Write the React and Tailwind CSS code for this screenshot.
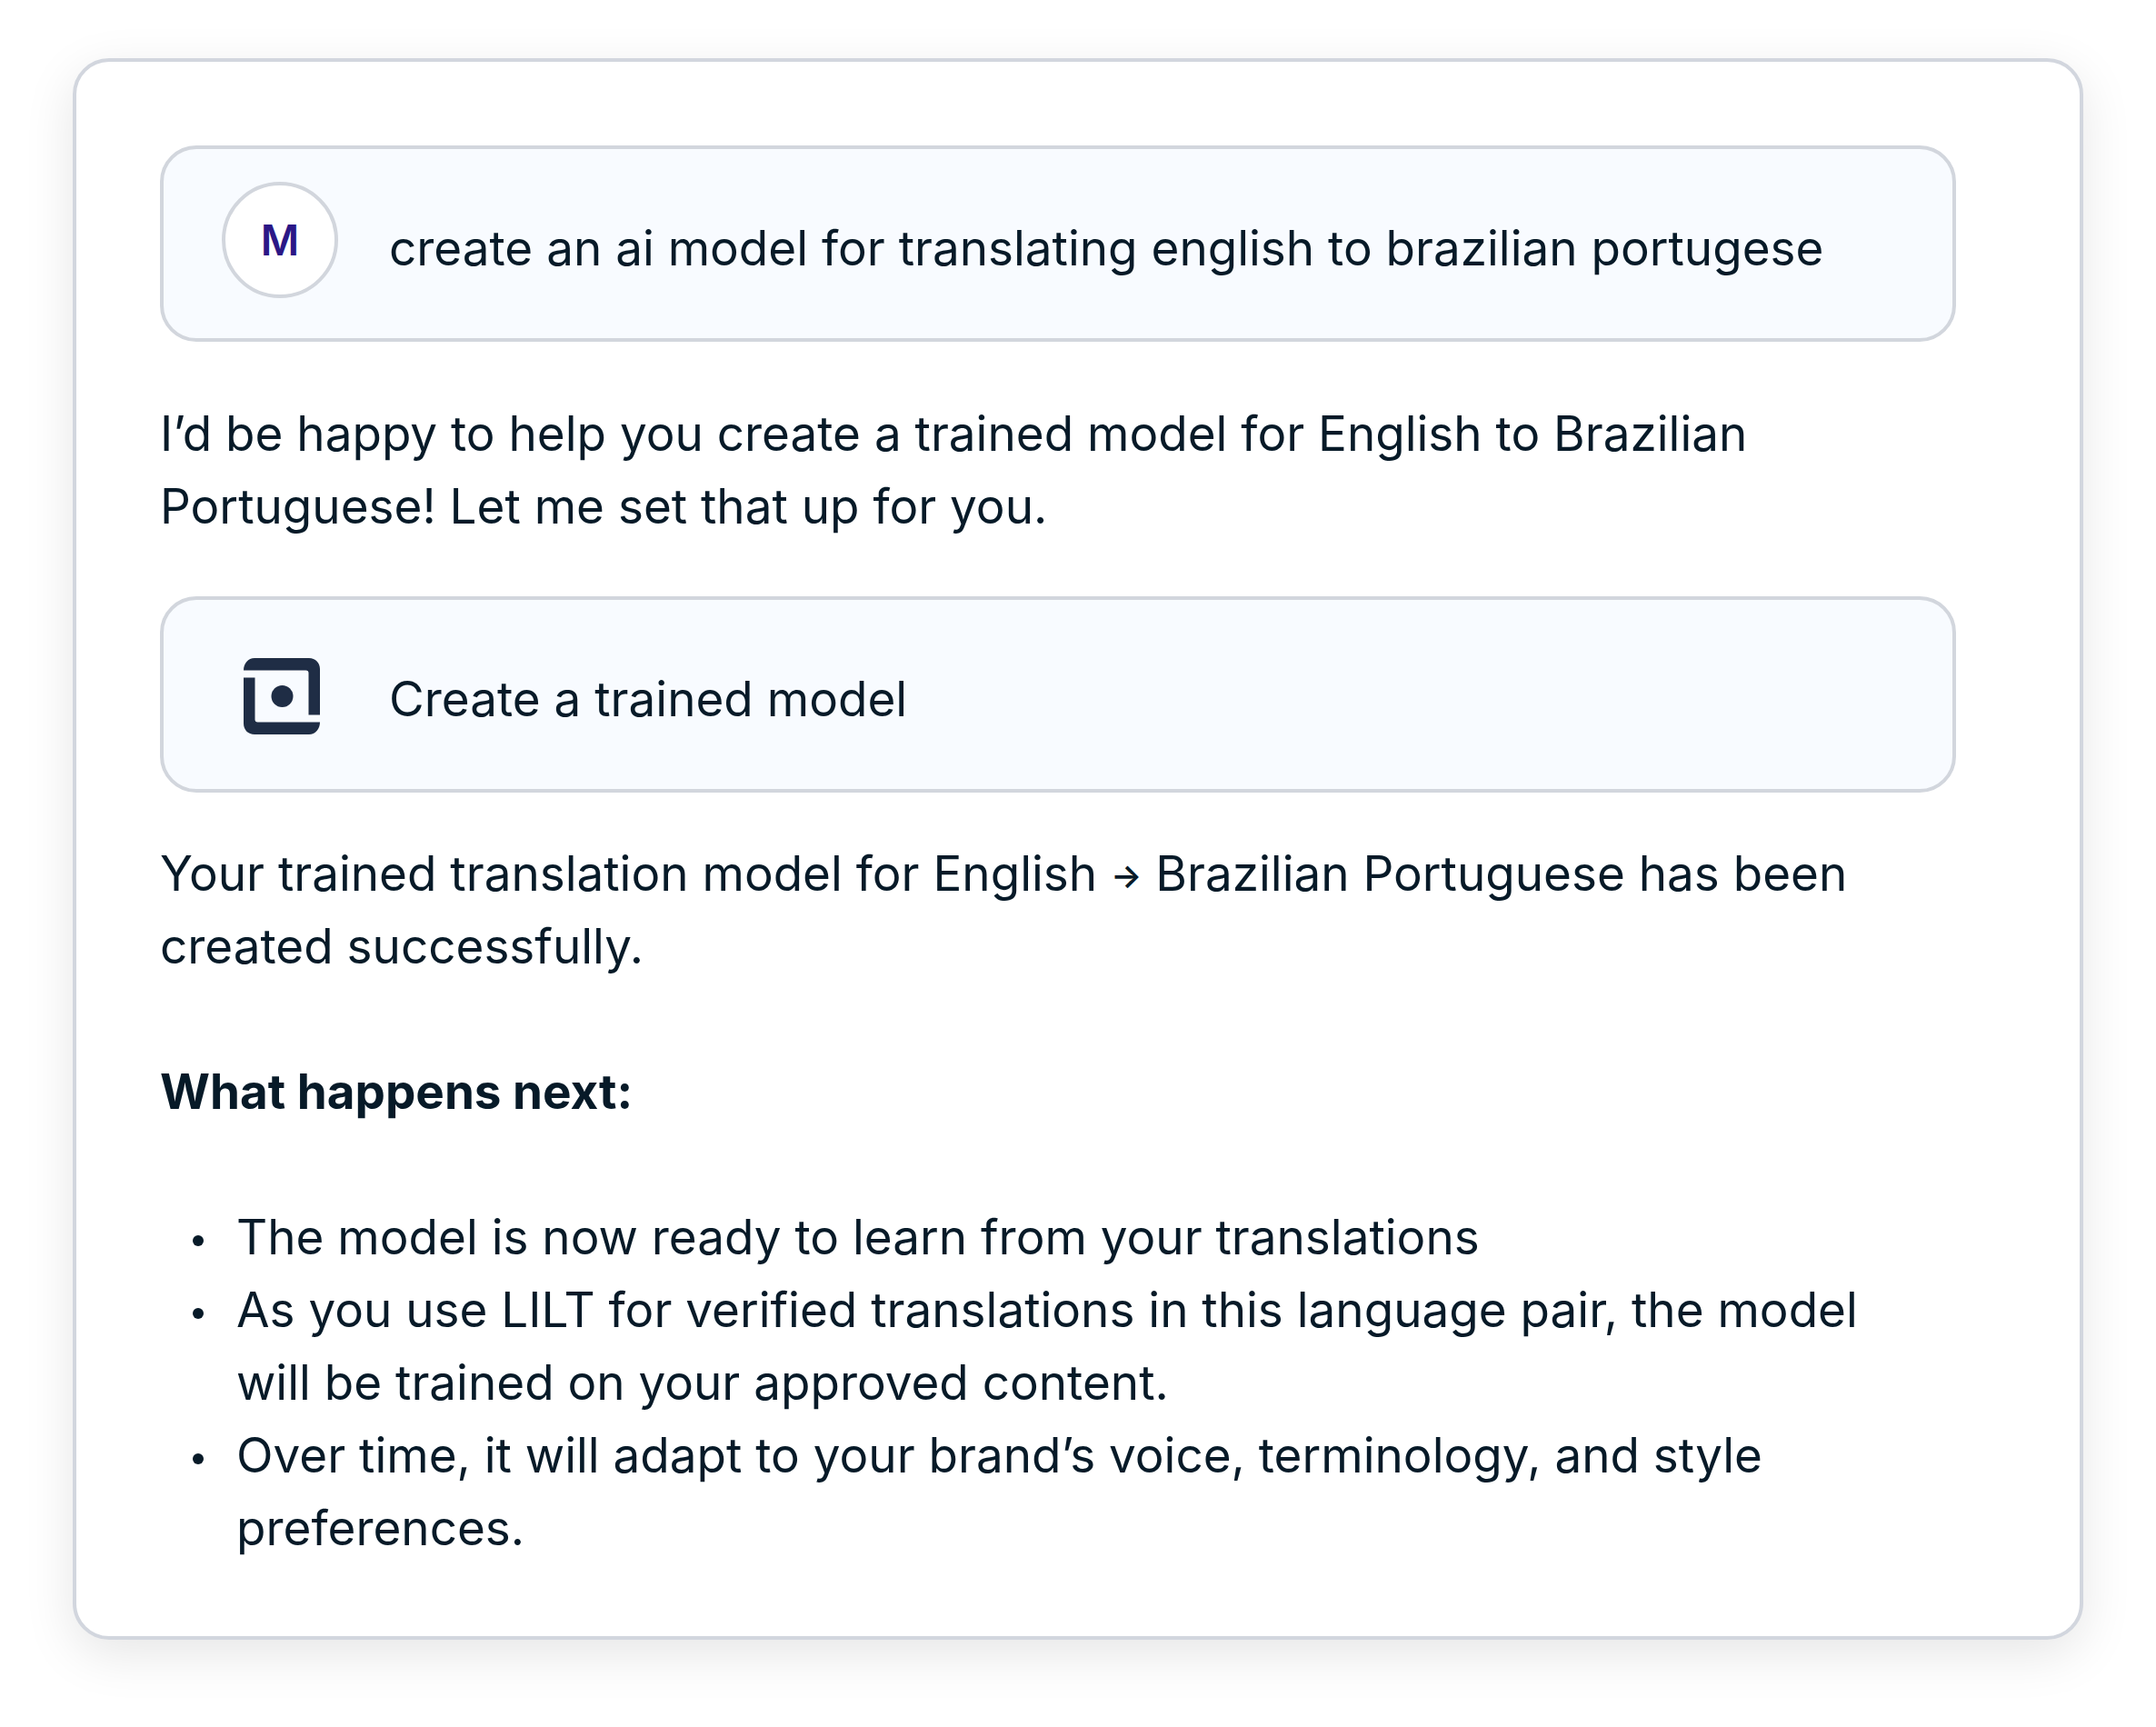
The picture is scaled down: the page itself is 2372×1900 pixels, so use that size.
const nextSteps = [
  "The model is now ready to learn from your translations",
  "As you use LILT for verified translations in this language pair, the model will be trained on your approved content.",
  "Over time, it will adapt to your brand’s voice, terminology, and style preferences.",
];

function ModelIcon() {
  return (
    <svg className="size-[84px]" viewBox="0 0 84 84" fill="#1f2d45" aria-hidden="true">
      <path d="M0 13.5C0 6 5 0 12 0H72C79 0 84 5 84 12V62.5H71.5V16.5A3 3 0 0 0 68.5 13.5Z" />
      <path d="M0 21.5H12.5V67.5A3 3 0 0 0 15.5 70.5H84C84 78 79 84 72 84H12C5 84 0 79 0 72Z" />
      <circle cx="42.5" cy="42" r="12" />
    </svg>
  );
}

function Bubble({ icon, children }) {
  return (
    <div className="flex items-start gap-14 rounded-[40px] border-4 border-[#d2d6dd] bg-[#f8fbff] pt-9 pr-14 pb-11 pl-16">
      {icon}
      <p className="mt-[33px] min-w-0 flex-1">{children}</p>
    </div>
  );
}

export default function App() {
  return (
    <main className="min-h-screen bg-white px-20 py-16 font-['Inter','Liberation_Sans',sans-serif] text-[53px] leading-[80px] text-[#071a28]">
      <section className="rounded-[40px] border-4 border-[#d2d6de] bg-white pt-23 pr-34 pb-[79px] pl-23 shadow-[0_16px_56px_rgba(0,0,0,0.1)]">
        <Bubble
          icon={
            <div className="flex size-32 shrink-0 items-center justify-center rounded-full border-4 border-[#d2d6dd] bg-white text-[46px] font-semibold text-[#2b1786]">
              M
            </div>
          }
        >
          create an ai model for translating english to brazilian portugese
        </Bubble>

        <p className="mt-[61px] mb-[59px]">
          I’d be happy to help you create a trained model for English to Brazilian Portuguese! Let me set that up for you.
        </p>

        <Bubble
          icon={
            <div className="size-32 shrink-0 pt-7 pl-6">
              <ModelIcon />
            </div>
          }
        >
          Create a trained model
        </Bubble>

        <p className="mt-[49px]">
          Your trained translation model for English{" "}
          <span className="align-[4px] text-4xl leading-none font-semibold">→</span> Brazilian Portuguese has been
          created successfully.
        </p>

        <h2 className="my-20 font-bold">What happens next:</h2>

        <ul className="pr-16">
          {nextSteps.map((step) => (
            <li key={step} className="flex items-start">
              <span className="mt-[38px] mr-9 ml-9 size-3 shrink-0 rounded-full bg-[#071a28]" />
              <span>{step}</span>
            </li>
          ))}
        </ul>
      </section>
    </main>
  );
}
